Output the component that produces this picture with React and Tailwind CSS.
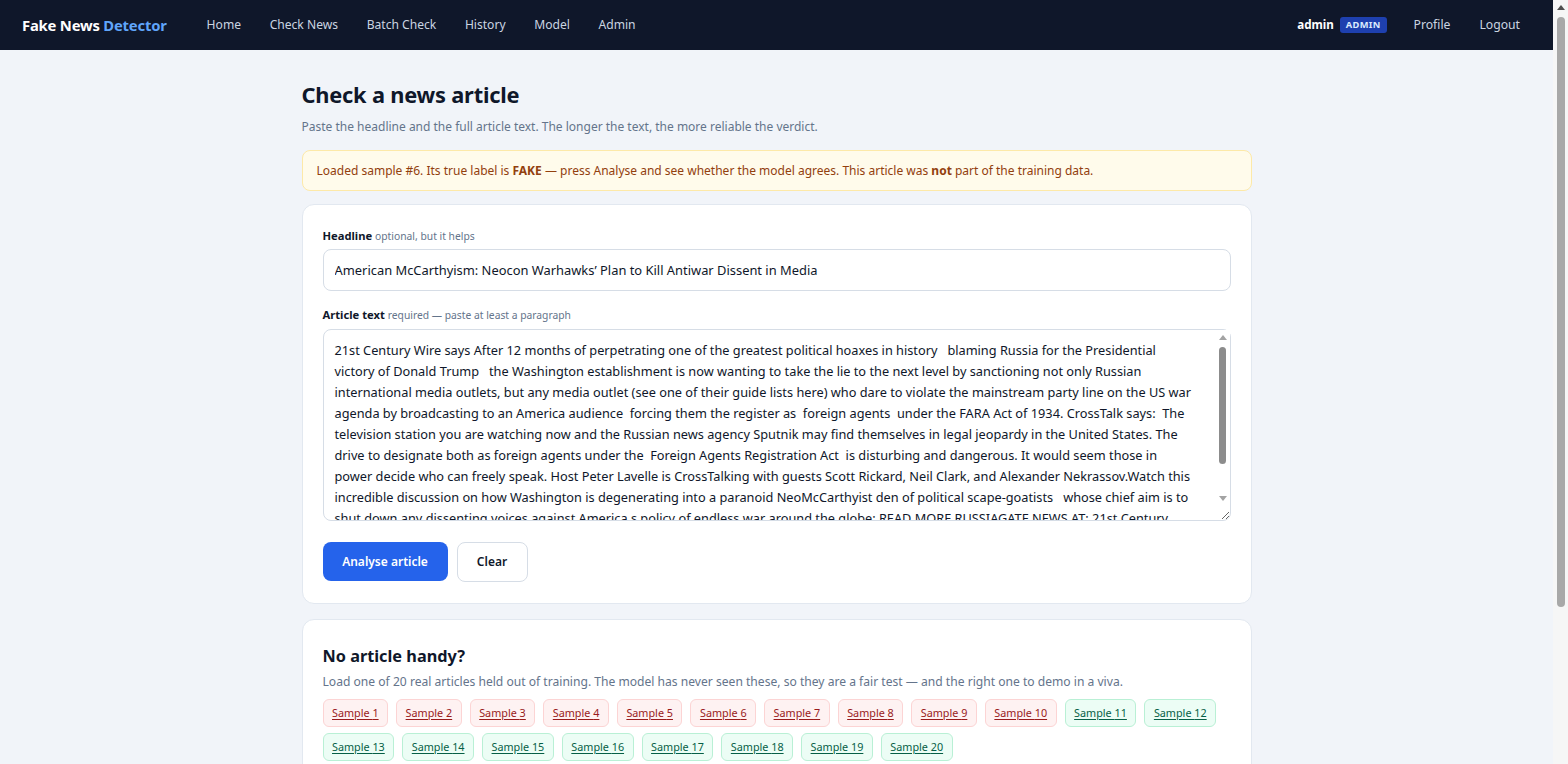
import React from "react";

const ARTICLE = [
  "21st Century Wire says After 12 months of perpetrating one of the greatest political hoaxes in history   blaming Russia for the Presidential",
  "victory of Donald Trump   the Washington establishment is now wanting to take the lie to the next level by sanctioning not only Russian",
  "international media outlets, but any media outlet (see one of their guide lists here) who dare to violate the mainstream party line on the US war",
  "agenda by broadcasting to an America audience  forcing them the register as  foreign agents  under the FARA Act of 1934. CrossTalk says:  The",
  "television station you are watching now and the Russian news agency Sputnik may find themselves in legal jeopardy in the United States. The",
  "drive to designate both as foreign agents under the  Foreign Agents Registration Act  is disturbing and dangerous. It would seem those in",
  "power decide who can freely speak. Host Peter Lavelle is CrossTalking with guests Scott Rickard, Neil Clark, and Alexander Nekrassov.Watch this",
  "incredible discussion on how Washington is degenerating into a paranoid NeoMcCarthyist den of political scape-goatists   whose chief aim is to",
  "shut down any dissenting voices against America s policy of endless war around the globe: READ MORE RUSSIAGATE NEWS AT: 21st Century",
  "Wire Russiagate FilesSUPPORT OUR WORK BY SUBSCRIBING & BECOMING A MEMBER @21WIRE.TV",
].join("\n");

const font = { fontFamily: '"Noto Sans", "Open Sans", Arial, sans-serif' };

function TriUp({ className }) {
  return (
    <svg width="8" height="5" viewBox="0 0 8 5" className={className}>
      <path d="M0 5 L4 0 L8 5 Z" fill="currentColor" />
    </svg>
  );
}
function TriDown({ className }) {
  return (
    <svg width="8" height="5" viewBox="0 0 8 5" className={className}>
      <path d="M0 0 L8 0 L4 5 Z" fill="currentColor" />
    </svg>
  );
}

export default function App() {
  const samples = Array.from({ length: 20 }, (_, i) => i + 1);
  return (
    <div className="flex h-screen bg-[#f1f4f9] text-[#0f172a]" style={font}>
      <div className="min-w-0 flex-1 overflow-y-auto">
        <nav className="flex h-[50px] items-center bg-[#0f172a] pl-[22px] pr-[33px]">
          <div className="text-[14.8px] font-bold tracking-[-0.2px] text-white">
            Fake News <span className="text-[#60a5fa]">Detector</span>
          </div>
          <div className="ml-[40px] flex gap-[28.6px] text-[12.1px] text-[#cbd5e1]">
            <span>Home</span>
            <span>Check News</span>
            <span>Batch Check</span>
            <span>History</span>
            <span>Model</span>
            <span>Admin</span>
          </div>
          <div className="ml-auto flex items-center text-[12.2px] text-[#cbd5e1]">
            <span className="text-[11.6px] font-bold text-white">admin</span>
            <span className="ml-[6px] rounded-[3px] bg-[#1e40af] px-[6px] py-[1px] text-[9.3px] font-bold tracking-[0.3px] text-[#dbeafe]">
              ADMIN
            </span>
            <span className="ml-[27px]">Profile</span>
            <span className="ml-[29px]">Logout</span>
          </div>
        </nav>

        <main className="mx-auto w-[950px] pt-[31px] pb-10">
          <h1 className="text-[21.8px] font-bold leading-[28px] tracking-[-0.2px] text-[#0f172a]">
            Check a news article
          </h1>
          <p className="mt-[9px] text-[12px] text-[#64748b]">
            Paste the headline and the full article text. The longer the text, the more reliable the verdict.
          </p>

          <div className="mt-[14px] flex h-[41px] items-center rounded-[8px] border border-[#fde9a8] bg-[#fffbeb] px-[14px] text-[12px] text-[#92400e]">
            <span>
              Loaded sample #6. Its true label is <b>FAKE</b> — press Analyse and see whether the model agrees. This article was{" "}
              <b>not</b> part of the training data.
            </span>
          </div>

          <section className="mt-[13px] rounded-[12px] border border-[#e2e8f0] bg-white px-5 pt-[23px] pb-[21px]">
            <label className="block text-[11.2px] leading-[16px]">
              <span className="font-bold text-[#0f172a]">Headline</span>{" "}
              <span className="text-[10.3px] text-[#64748b]">optional, but it helps</span>
            </label>
            <input
              readOnly
              value="American McCarthyism: Neocon Warhawks’ Plan to Kill Antiwar Dissent in Media"
              className="mt-[5px] block h-[42px] w-full rounded-[8px] border border-[#d6dde6] px-[11px] text-[12.9px] text-[#0f172a] outline-none"
              style={font}
            />
            <label className="mt-[16px] block text-[11.2px] leading-[16px]">
              <span className="font-bold text-[#0f172a]">Article text</span>{" "}
              <span className="text-[10.3px] text-[#64748b]">required — paste at least a paragraph</span>
            </label>
            <div className="relative mt-[6px]">
              <textarea
                readOnly
                value={ARTICLE}
                className="block h-[192px] w-full resize-y overflow-y-scroll rounded-[8px] border border-[#d6dde6] pl-[11px] pr-[20px] pt-[10px] text-[12.75px] leading-[21px] text-[#0f172a] outline-none"
                style={font}
              />
              <div className="pointer-events-none absolute right-[1px] top-[1px] bottom-[16px] flex w-[14px] flex-col items-center bg-white">
                <div className="flex h-[14px] items-center justify-center text-[#a3a3a3]">
                  <TriUp />
                </div>
                <div className="mt-[3px] h-[117px] w-[7px] rounded-full bg-[#8c8c8c]" />
                <div className="mt-auto flex h-[14px] items-center justify-center text-[#a3a3a3]">
                  <TriDown />
                </div>
              </div>
            </div>
            <div className="mt-[21px] flex gap-[9px]">
              <button className="h-[39px] w-[125px] rounded-[8px] bg-[#2563eb] text-[12px] font-semibold text-white">
                Analyse article
              </button>
              <button className="h-[40px] w-[71px] rounded-[8px] border border-[#d6dde6] bg-white text-[12px] font-semibold text-[#0f172a]">
                Clear
              </button>
            </div>
          </section>

          <section className="mt-[15px] rounded-[12px] border border-[#e2e8f0] bg-white px-5 pt-[24px] pb-[20px]">
            <h2 className="text-[16.3px] font-bold leading-[24px] text-[#0f172a]">No article handy?</h2>
            <p className="mt-[5px] text-[12.1px] text-[#64748b]">
              Load one of 20 real articles held out of training. The model has never seen these, so they are a fair test — and the right one to demo in a viva.
            </p>
            <div className="mt-[8px] flex flex-wrap gap-x-[8px] gap-y-[6px]">
              {samples.map((n) =>
                n <= 10 ? (
                  <span
                    key={n}
                    className="flex h-[28px] items-center rounded-[6px] border border-[#fcd4d4] bg-[#fef2f2] px-[8.5px] text-[10.8px] text-[#991b1b] underline underline-offset-2"
                  >
                    Sample {n}
                  </span>
                ) : (
                  <span
                    key={n}
                    className="flex h-[28px] items-center rounded-[6px] border border-[#b9f0d5] bg-[#ecfdf5] px-[8.5px] text-[10.8px] text-[#065f46] underline underline-offset-2"
                  >
                    Sample {n}
                  </span>
                )
              )}
            </div>
          </section>
        </main>
      </div>

      <div className="flex w-[15px] shrink-0 flex-col items-center bg-[#f6f6f6]">
        <div className="flex h-[15px] items-center justify-center text-[#505050]">
          <TriUp />
        </div>
        <div className="mt-[2px] h-[590px] w-[8px] rounded-full bg-[#a8a8a8]" />
      </div>
    </div>
  );
}
